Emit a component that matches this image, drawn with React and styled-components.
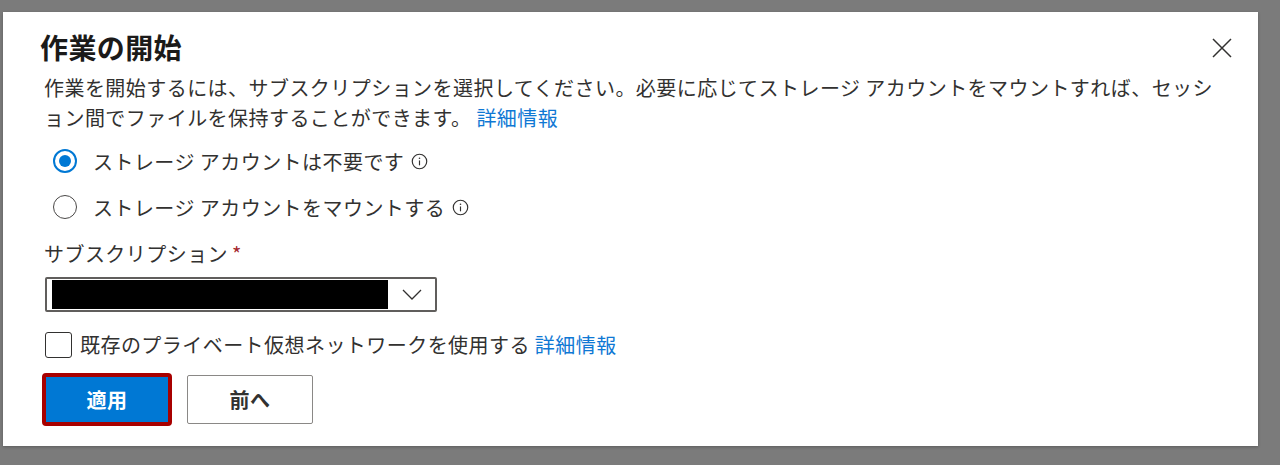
import React from 'react';
import styled, { createGlobalStyle } from 'styled-components';

const GlobalStyle = createGlobalStyle`
  html, body {
    margin: 0;
    padding: 0;
    background: #7b7b7b;
    font-family: "Noto Sans CJK JP", "Noto Sans", sans-serif;
    color: #323130;
  }
`;

const Backdrop = styled.div`
  width: 1280px;
  height: 465px;
  padding: 12px 0 0 3px;
  box-sizing: border-box;
`;

const Dialog = styled.div`
  position: relative;
  width: 1255px;
  height: 434px;
  box-sizing: border-box;
  background: #fff;
  box-shadow: 0 1px 3px rgba(0, 0, 0, 0.25);
  padding: 17px 0 0 38px;
`;

const Title = styled.h1`
  margin: 0 0 0 -1px;
  font-size: 28px;
  line-height: 36px;
  font-weight: 700;
  letter-spacing: 0.4px;
  color: #1b1a19;
`;

const CloseButton = styled.button`
  position: absolute;
  top: 25px;
  right: 25px;
  width: 22px;
  height: 22px;
  padding: 0;
  border: 0;
  background: none;
  display: flex;
  align-items: center;
  justify-content: center;
`;

const Body = styled.div`
  padding-left: 3px;
  width: 1176px;
  letter-spacing: 0.45px;
`;

const Description = styled.p`
  margin: 8px 0 0;
  font-size: 20px;
  line-height: 30px;
`;

const Link = styled.a`
  color: #0f78d4;
  text-decoration: none;
`;

const RadioGroup = styled.div`
  display: flex;
  flex-direction: column;
  gap: 6px;
  margin-top: 8px;
  padding-left: 9px;
`;

const RadioRow = styled.label`
  display: flex;
  align-items: center;
  height: 40px;
  font-size: 20px;
  gap: 16px;
`;

const RadioCircle = styled.span`
  width: 24px;
  height: 24px;
  box-sizing: border-box;
  border-radius: 50%;
  border: ${p => (p.checked ? '2px solid #0078d4' : '1.5px solid #4a4847')};
  display: flex;
  align-items: center;
  justify-content: center;
  flex-shrink: 0;
  &::after {
    content: '';
    display: ${p => (p.checked ? 'block' : 'none')};
    width: 12px;
    height: 12px;
    border-radius: 50%;
    background: #0078d4;
  }
`;

const LabelText = styled.span`
  display: inline-flex;
  align-items: center;
  gap: 7px;
`;

const FieldLabel = styled.div`
  margin-top: 13px;
  font-size: 20px;
  line-height: 28px;
  color: #323130;
`;

const Required = styled.span`
  color: #a4262c;
  margin-left: 4px;
`;

const Select = styled.div`
  margin-top: 9px;
  margin-left: 1px;
  width: 392px;
  height: 35px;
  box-sizing: border-box;
  border: 2px solid #605e5c;
  border-radius: 2px;
  display: flex;
  align-items: center;
  padding: 1px 0 1px 5px;
`;

const Redacted = styled.div`
  width: 336px;
  height: 100%;
  background: #000;
`;

const Chevron = styled.div`
  flex: 1;
  display: flex;
  justify-content: center;
  align-items: center;
`;

const CheckRow = styled.label`
  display: flex;
  align-items: center;
  gap: 8px;
  margin-top: 20px;
  margin-left: 1px;
  font-size: 20px;
  line-height: 26px;
`;

const CheckBox = styled.span`
  width: 27px;
  height: 26px;
  box-sizing: border-box;
  border: 1.5px solid #323130;
  border-radius: 3px;
  flex-shrink: 0;
`;

const Actions = styled.div`
  display: flex;
  align-items: flex-start;
  gap: 17px;
  margin-top: 17px;
`;

const Button = styled.button`
  width: 126px;
  height: 49px;
  box-sizing: border-box;
  border-radius: 2px;
  font-family: inherit;
  font-size: 20px;
  font-weight: 700;
  letter-spacing: 0.4px;
  padding: 0;
  background: ${p => (p.primary ? '#0078d4' : '#fff')};
  color: ${p => (p.primary ? '#fff' : '#323130')};
  border: ${p => (p.primary ? '1px solid #0078d4' : '1px solid #8a8886')};
  outline: ${p => (p.focused ? '4px solid #a80000' : 'none')};
  outline-offset: -2px;
`;

const InfoIcon = () => (
  <svg width="17" height="17" viewBox="0 0 16 16" fill="none">
    <circle cx="8" cy="8" r="6.8" stroke="#323130" strokeWidth="1.1" />
    <line x1="8" y1="7" x2="8" y2="11.6" stroke="#323130" strokeWidth="1.1" />
    <circle cx="8" cy="4.9" r="0.75" fill="#323130" />
  </svg>
);

export default function App() {
  return (
    <Backdrop>
      <GlobalStyle />
      <Dialog>
        <Title>作業の開始</Title>
        <CloseButton aria-label="close">
          <svg width="20" height="20" viewBox="0 0 20 20">
            <path d="M1 1 L19 19 M19 1 L1 19" stroke="#323130" strokeWidth="1.5" />
          </svg>
        </CloseButton>
        <Body>
          <Description>
            作業を開始するには、サブスクリプションを選択してください。必要に応じてストレージ アカウントをマウントすれば、セッション間でファイルを保持することができます。 <Link href="#">詳細情報</Link>
          </Description>
          <RadioGroup>
            <RadioRow>
              <RadioCircle checked />
              <LabelText>ストレージ アカウントは不要です<InfoIcon /></LabelText>
            </RadioRow>
            <RadioRow>
              <RadioCircle />
              <LabelText>ストレージ アカウントをマウントする<InfoIcon /></LabelText>
            </RadioRow>
          </RadioGroup>
          <FieldLabel>
            サブスクリプション<Required>*</Required>
          </FieldLabel>
          <Select>
            <Redacted />
            <Chevron>
              <svg width="20" height="11" viewBox="0 0 20 11">
                <polyline points="1,1 10,10 19,1" fill="none" stroke="#323130" strokeWidth="1.3" />
              </svg>
            </Chevron>
          </Select>
          <CheckRow>
            <CheckBox />
            <span>
              既存のプライベート仮想ネットワークを使用する <Link href="#">詳細情報</Link>
            </span>
          </CheckRow>
          <Actions>
            <Button primary focused>適用</Button>
            <Button>前へ</Button>
          </Actions>
        </Body>
      </Dialog>
    </Backdrop>
  );
}
